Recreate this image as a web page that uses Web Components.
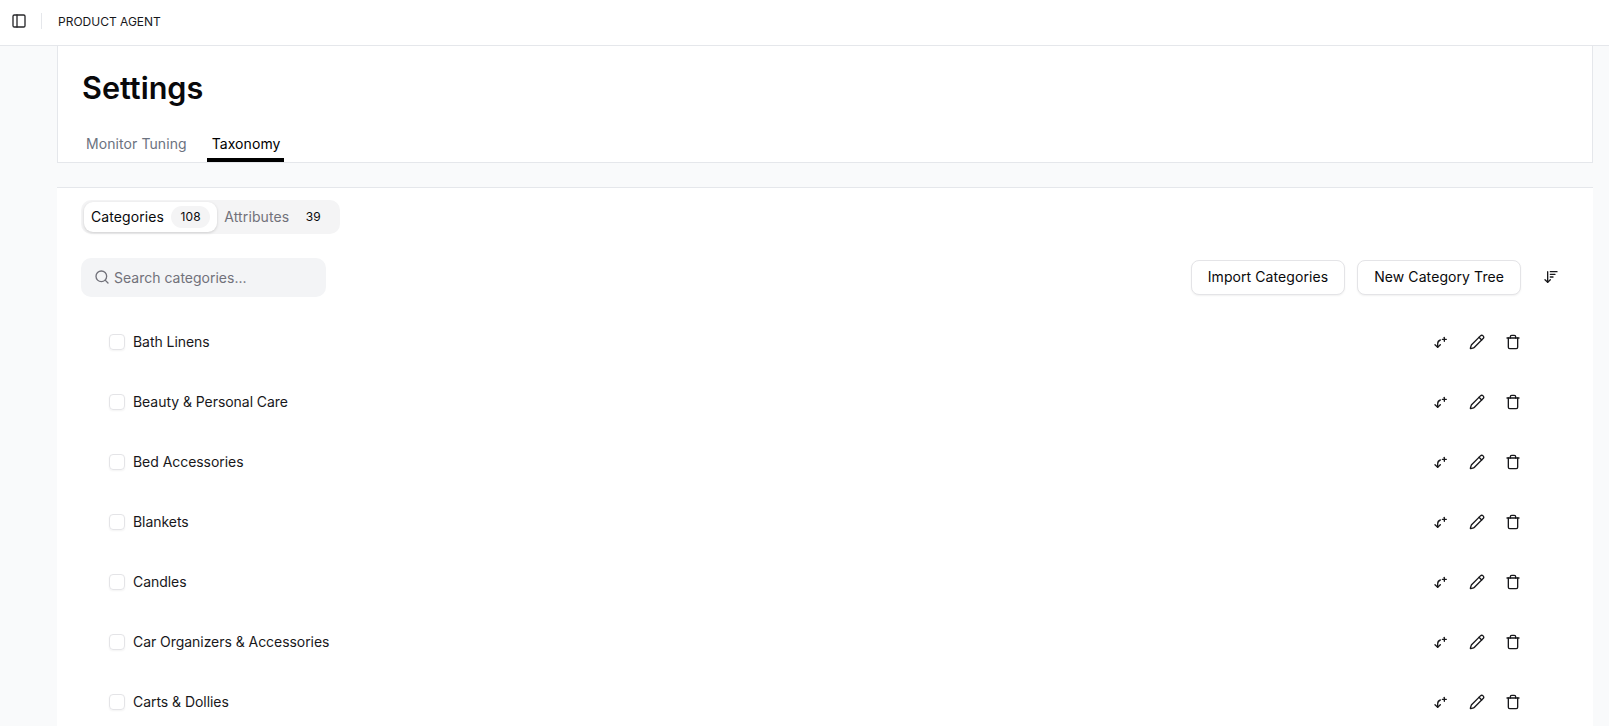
<!DOCTYPE html>
<html>
<head>
<meta charset="utf-8">
<title>Settings</title>
<style>
  html, body { margin: 0; height: 100%; overflow: hidden; }
  body { background: #f9fafb; font-family: Inter, "Liberation Sans", sans-serif; color: #09090b; }
</style>
</head>
<body>
<app-shell>
  <settings-head></settings-head>
  <taxonomy-panel>
    <cat-row name="Bath Linens"></cat-row>
    <cat-row name="Beauty &amp; Personal Care"></cat-row>
    <cat-row name="Bed Accessories"></cat-row>
    <cat-row name="Blankets"></cat-row>
    <cat-row name="Candles"></cat-row>
    <cat-row name="Car Organizers &amp; Accessories"></cat-row>
    <cat-row name="Carts &amp; Dollies"></cat-row>
  </taxonomy-panel>
</app-shell>

<script>
// app frame: top bar + centered content column
class AppShell extends HTMLElement {
  constructor() {
    super();
    this.attachShadow({ mode: 'open' }).innerHTML = `
      <style>
        :host { display: block; height: 726px; overflow: hidden; }
        header {
          height: 46px; box-sizing: border-box; background: #fff;
          border-bottom: 1px solid #e5e7eb;
          display: flex; align-items: center; padding: 0 0 3px 11px;
        }
        header svg { width: 16px; height: 16px; display: block; }
        .sep { width: 1px; height: 16px; background: #e5e7eb; margin: 0 16px 0 14px; }
        .name { font-size: 12px; color: #18181b; }
        main { margin: 0 16px 0 57px; }
      </style>
      <header>
        <svg viewBox="0 0 24 24" fill="none" stroke="#27272a" stroke-width="2" stroke-linecap="round" stroke-linejoin="round">
          <rect x="3" y="3" width="18" height="18" rx="2"/><path d="M9 3v18"/>
        </svg>
        <span class="sep"></span>
        <span class="name">PRODUCT AGENT</span>
      </header>
      <main><slot></slot></main>`;
  }
}
customElements.define('app-shell', AppShell);

class SettingsHead extends HTMLElement {
  constructor() {
    super();
    this.attachShadow({ mode: 'open' }).innerHTML = `
      <style>
        :host {
          display: block; box-sizing: border-box; height: 117px; background: #fff;
          border: 1px solid #e5e7eb; border-top: 0; padding: 24px 23px 0;
        }
        h1 { margin: 0 0 0 1px; font-size: 30.6px; line-height: 36px; font-weight: 600; color: #09090b; }
        nav { display: flex; gap: 15px; margin-top: 19px; }
        a {
          box-sizing: border-box; height: 37px; padding: 9px 5px 0; font-size: 14px; line-height: 20px;
          font-weight: 400; color: #6b7280; letter-spacing: .08px;
        }
        a.on { color: #000; border-bottom: 4px solid #000; padding-right: 3px; }
      </style>
      <h1>Settings</h1>
      <nav><a>Monitor Tuning</a><a class="on">Taxonomy</a></nav>`;
  }
}
customElements.define('settings-head', SettingsHead);

class TaxonomyPanel extends HTMLElement {
  constructor() {
    super();
    this.attachShadow({ mode: 'open' }).innerHTML = `
      <style>
        :host {
          display: block; background: #fff; margin-top: 24px;
          border-top: 1px solid #e5e7eb; padding: 12px 24px 0;
        }
        .seg {
          display: inline-flex; align-items: center; height: 34px; box-sizing: border-box;
          background: #f4f4f5; border-radius: 10px; padding: 2px 3px; vertical-align: top;
        }
        .seg div {
          display: flex; align-items: center; height: 30px; box-sizing: border-box;
          padding: 0 7px 1px 7px; font-size: 14px; font-weight: 400; color: #71717a; border-radius: 9px;
          letter-spacing: .1px;
        }
        .seg .on { background: #fff; color: #09090b; box-shadow: 0 1px 3px rgba(0,0,0,.16); }
        .seg b {
          font-size: 12px; font-weight: 400; color: #09090b; height: 22px; line-height: 22px;
          padding: 0 9.5px; margin-left: 7px; border-radius: 11px;
        }
        .seg .on b { background: #f4f4f5; }
        .bar { display: flex; align-items: center; margin-top: 24px; height: 39px; }
        .search {
          width: 245px; height: 39px; box-sizing: border-box; background: #f3f4f6; border-radius: 10px;
          display: flex; align-items: center; gap: 4px; padding: 0 0 1px 13px; font-size: 14px; color: #71717a;
        }
        .search svg { width: 16px; height: 16px; }
        .spacer { flex: 1; }
        button {
          font: 400 14px Inter, "Liberation Sans", sans-serif; color: #09090b; background: #fff;
          height: 35px; padding: 0 16px 1px; border: 1px solid #e4e4e7; border-radius: 8px;
          box-shadow: 0 1px 2px rgba(0,0,0,.06); margin: 0 0 1px 12px; letter-spacing: .08px;
        }
        .sort { width: 16px; height: 16px; margin: -2px 10px 0 22px; display: block; }
        .rows { margin-top: 15px; }
      </style>
      <div class="seg">
        <div class="on">Categories<b>108</b></div>
        <div>Attributes<b>39</b></div>
      </div>
      <div class="bar">
        <div class="search">
          <svg viewBox="0 0 24 24" fill="none" stroke="#71717a" stroke-width="2" stroke-linecap="round" stroke-linejoin="round"><circle cx="11" cy="11" r="8"/><path d="m21 21-4.3-4.3"/></svg>
          Search categories...
        </div>
        <span class="spacer"></span>
        <button>Import Categories</button>
        <button>New Category Tree</button>
        <svg class="sort" viewBox="0 0 24 24" fill="none" stroke="#18181b" stroke-width="2" stroke-linecap="round" stroke-linejoin="round">
          <path d="m3 16 4 4 4-4"/><path d="M7 20V4"/><path d="M11 4h10"/><path d="M11 8h7"/><path d="M11 12h4"/>
        </svg>
      </div>
      <div class="rows"><slot></slot></div>`;
  }
}
customElements.define('taxonomy-panel', TaxonomyPanel);

class CatRow extends HTMLElement {
  static get observedAttributes() { return ['name']; }
  constructor() {
    super();
    this.attachShadow({ mode: 'open' }).innerHTML = `
      <style>
        :host {
          display: flex; align-items: center; height: 60px; padding-left: 28px;
          font-size: 14px; color: #18181b;
        }
        .box {
          width: 16px; height: 16px; box-sizing: border-box; border: 1px solid #e4e4e7;
          border-radius: 4px; box-shadow: 0 1px 2px rgba(0,0,0,.05); margin-right: 8px;
        }
        .name { flex: 1; padding-bottom: 1px; letter-spacing: -0.05px; }
        .acts { display: flex; gap: 20px; margin-right: 48px; }
        svg { width: 16px; height: 16px; display: block; }
      </style>
      <span class="box"></span>
      <span class="name"></span>
      <span class="acts">
        <svg viewBox="0 0 24 24" fill="none" stroke="#18181b" stroke-width="2" stroke-linecap="round" stroke-linejoin="round">
          <path d="M11 9a6 6 0 0 0-4 5.5V20"/><path d="m3 16 4 4 4-4"/><path d="M17 5v6"/><path d="M14 8h6"/>
        </svg>
        <svg viewBox="0 0 24 24" fill="none" stroke="#18181b" stroke-width="2" stroke-linecap="round" stroke-linejoin="round">
          <path d="M21.17 6.81a1 1 0 0 0-3.99-3.99L3.84 16.17a2 2 0 0 0-.5.83l-1.32 4.35a.5.5 0 0 0 .62.62l4.35-1.32a2 2 0 0 0 .83-.5z"/><path d="m15 5 4 4"/>
        </svg>
        <svg viewBox="0 0 24 24" fill="none" stroke="#18181b" stroke-width="2" stroke-linecap="round" stroke-linejoin="round">
          <path d="M3 6h18"/><path d="M19 6v14a2 2 0 0 1-2 2H7a2 2 0 0 1-2-2V6"/><path d="M8 6V4a2 2 0 0 1 2-2h4a2 2 0 0 1 2 2v2"/>
        </svg>
      </span>`;
  }
  attributeChangedCallback(n, oldV, newV) {
    if (n === 'name') this.shadowRoot.querySelector('.name').textContent = newV;
  }
}
customElements.define('cat-row', CatRow);
</script>
</body>
</html>
